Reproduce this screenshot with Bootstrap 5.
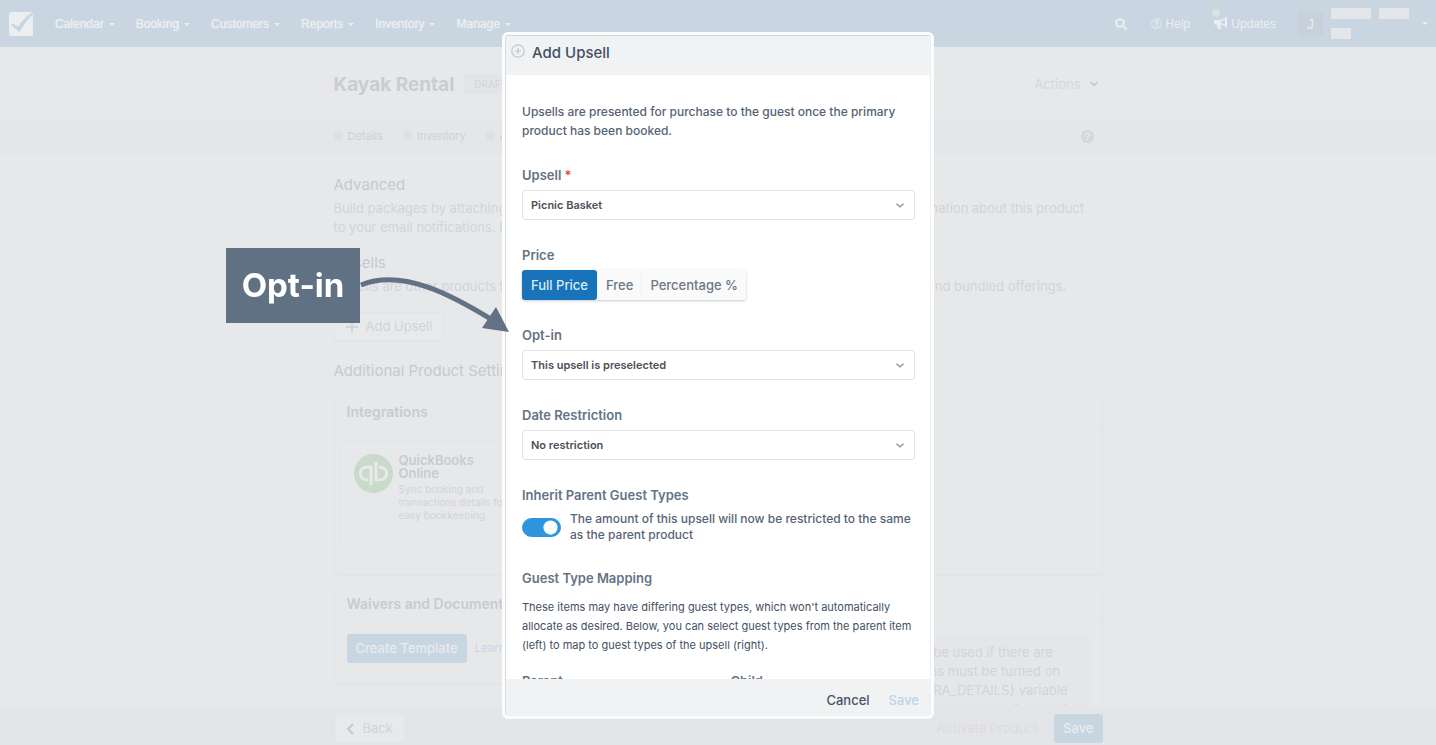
<!DOCTYPE html>
<html lang="en">
<head>
<meta charset="utf-8">
<meta name="viewport" content="width=device-width, initial-scale=1">
<title>Kayak Rental – Add Upsell</title>
<link href="https://cdn.jsdelivr.net/npm/bootstrap@5.3.0/dist/css/bootstrap.min.css" rel="stylesheet">
<style>
  body { font: 400 13px/19px Inter, "Liberation Sans", sans-serif; background: #e7e8ea; color: #d2d4d8; overflow: hidden; height: 100vh; }
  a { text-decoration: none; }
  button { font-family: inherit; }
  .topbar { background: #c9d6e1; min-height: 47px; font: 400 12px/16px "Liberation Sans", sans-serif; --bs-navbar-color: #eceef0; }
  .topbar, .topbar a, .topbar button { color: #eceef0; }
  .topbar .menu { gap: 21px; margin-left: 21px; }
  .topbar button, .plain-btn { background: none; border: 0; padding: 0; }
  .topbar .dropdown-toggle { text-shadow: 0 0 1px #eceef0; }
  .topbar .dropdown-toggle::after { margin-left: 5px; border-width: 3px; border-bottom: 0; vertical-align: 2px; }
  .topbar .account::after { margin-left: 13px; }
  .avatar { width: 25px; height: 25px; background: #c6d1da; border-radius: 3px; font-size: 14px; }
  .who { display: grid; gap: 9px; width: 78px; }
  .redact { height: 11px; background: #e4e6e9; }
  .news-dot { position: absolute; left: -2px; top: -7px; width: 8px; height: 8px; border-radius: 50%; background: #dfe0e0; }
  .updates { margin-right: 22px; }
  .column { max-width: 769px; margin: 0 auto; width: 100%; }
  .title-row { height: 74px; }
  h1 { font-size: 19px; line-height: 24px; font-weight: 700; color: #c9ccd1; margin: 2px 0 0; }
  .draft { font-size: 10px; line-height: 20px; padding: 0 10px; background: #e3e4e8; border-radius: 3px; margin-left: 10px; }
  .tabband { background: #e5e6ea; border-top: 1px solid #e4e6e8; height: 34px; font-size: 11px; padding-bottom: 4px; }
  .tabband a { color: #cfd1d6; }
  .tabband a::before { content: ""; display: inline-block; width: 9px; height: 9px; border-radius: 50%; background: #dedfe3; margin-right: 5px; }
  h2 { font-size: 15px; line-height: 20px; font-weight: 400; color: #c6c9d0; margin: 0; }
  .learn { color: #c7d7e4; }
  .ghost { height: 29px; padding: 0 11px; border: 1px solid #e3e4e7; border-radius: 4px; background: #e8e9eb; color: #d2d4d8; box-shadow: 0 1px 2px #e2e3e6; font-size: 13px; }
  .panel { border: 1px solid #e3e4e7; border-radius: 4px; box-shadow: 0 1px 2px #e3e4e7; }
  .panel h3 { font-size: 14px; line-height: 19px; font-weight: 600; color: #c8cbd1; margin: 0; padding: 6px 12px; border-bottom: 1px solid #e3e4e7; }
  .settings { margin-top: 14px; }
  .integration { width: 220px; height: 108px; margin: 12px 5px 26px; border: 1px solid #e3e4e7; border-radius: 4px; padding: 13px; gap: 6px; }
  .integration div { width: 108px; }
  .integration strong { font-size: 13px; line-height: 13px; font-weight: 600; color: #c8cbd1; display: block; width: 90px; }
  .integration p { font-size: 10px; line-height: 13px; margin: 3px 0 0; }
  .blue { background: #c8d6e1; color: #e9ebed; border: 0; border-radius: 3px; font-size: 13px; font-weight: 500; height: 29px; padding: 0 9px; }
  .template-row { margin: 14px 12px 4px; }
  .note { background: #e5e6ea; border-radius: 4px; margin: 14px 12px 0; padding: 9px 22px; }
  .actionbar { background: #e4e5e9; height: 39px; padding-top: 8px; }

  .modal-frame { width: 432px; max-width: 100%; height: calc(100vh - 58px); margin: 32px auto 0; position: relative; }
  .modal-frame .modal-content { height: 100%; border: 3px solid #fbfcfc; border-radius: 6px; background: #fff; color: #566375; overflow: hidden; background-clip: border-box; }
  .modal-frame .modal-content > * { border-left: 1px solid #d9dbde; border-right: 1px solid #eef0f2; }
  .modal-frame .modal-header { background: #f1f2f4; height: 40px; flex: none; padding: 0 5px 5px; gap: 7px; justify-content: flex-start; border-top: 1px solid #d3d6d9; border-bottom: 0; border-radius: 0; }
  .modal-title { font-size: 15px; line-height: 20px; font-weight: 500; color: #425062; }
  .modal-frame .modal-body { padding: 27px 15px 0 16px; overflow: hidden; }
  .intro { margin: 0 0 27px; font-size: 12px; font-weight: 500; }
  .group { margin-bottom: 27px; }
  .caption { display: block; font-size: 13px; line-height: 16px; font-weight: 600; color: #657386; margin: 0 0 7px; }
  .form-select { height: 30px; padding: 0 30px 0 8px; font-size: 11px; line-height: 28px; font-weight: 600; color: #4c5057; border: 1px solid #e1e3e6; border-radius: 3px;
    background-image: url("data:image/svg+xml,%3csvg xmlns='http://www.w3.org/2000/svg' viewBox='0 0 10 10'%3e%3cpath d='M2 4l3 2.5L8 4' fill='none' stroke='%238b97a6' stroke-width='1.2'/%3e%3c/svg%3e"); background-size: 12px; background-position: right 8px center; }
  .prices { border-radius: 3px; box-shadow: 0 1px 3px #c9cdd3; }
  .prices .btn { font-size: 13px; line-height: 30px; font-weight: 500; padding: 0 8px; border: 0; border-left: 1px solid #f0f1f3; background: #fafafa; color: #6c7886; border-radius: 3px; margin: 0; }
  .prices .btn-check:checked + .btn { background: #1873ba; color: #dcebf7; border-left: 0; padding: 0 9px; }
  .switch-row { margin-top: 8px; }
  .form-check-input.toggle { width: 39px; height: 19px; margin: 0; flex: none; border-color: #2d94de; background-color: #2d94de; background-size: 19px; }
  .hint { font-size: 12px; line-height: 16px; font-weight: 500; margin-left: 9px; }
  .mapping { font-size: 11px; line-height: 19px; margin: 0 0 18px; font-weight: 400; color: #435063; }
  .modal-frame .modal-footer { background: #f1f2f4; flex: none; height: 37px; padding: 5px 11px 0 0; gap: 19px; border-top: 0; border-bottom: 0; border-radius: 0; }
  .modal-footer > * { margin: 0; }
  .modal-footer button { font-size: 13px; font-weight: 500; color: #465365; line-height: 19px; }
  .modal-footer button:disabled { color: #bdd3e6; }

  .callout { position: absolute; left: -276px; top: 216px; pointer-events: none; }
  .callout-label { width: 134px; height: 75px; background: #5b6c7ff5; color: #fff; font-size: 33px; line-height: 74px; font-weight: 700; text-align: center; font-family: Inter, sans-serif; }
</style>
</head>
<body class="modal-open">

<nav class="topbar navbar p-0 px-2 flex-nowrap align-items-center" aria-label="Main">
  <a href="#" aria-label="Home"><svg width="26" height="26" viewBox="0 0 26 26" class="d-block"><rect x="1" y="1" width="24" height="24" rx="2.500" fill="#eceef0"/><path d="M3 14q0-2 3-1l4 2.500Q16 7 23 2l2 0v1Q17 11 11.500 21z" fill="#c9d6e1"/></svg></a>
  <div class="menu d-flex me-auto">
    <button class="dropdown-toggle">Calendar</button>
    <button class="dropdown-toggle">Booking</button>
    <button class="dropdown-toggle">Customers</button>
    <button class="dropdown-toggle">Reports</button>
    <button class="dropdown-toggle">Inventory</button>
    <button class="dropdown-toggle">Manage</button>
  </div>
  <div class="d-flex align-items-center">
    <button aria-label="Search" class="me-4"><svg width="12" height="12" viewBox="0 0 12 12" fill="none" stroke="#eceef0" stroke-width="2" class="d-block"><circle cx="5" cy="5" r="3.8"/><path d="M8 8l3.5 3.5"/></svg></button>
    <a href="#" class="d-flex align-items-center gap-1 me-4"><svg width="11" height="11" viewBox="0 0 12 12" fill="none" stroke="#eceef0"><circle cx="6" cy="6" r="5.3"/><path d="M4.3 4.8Q4.5 3.2 6 3.2T7.7 4.7Q7.7 5.6 6 6.4V7.2M6 8.2v1.3" stroke-width="1.4"/></svg>Help</a>
    <a href="#" class="updates position-relative d-flex align-items-center gap-1"><span class="news-dot"></span><svg width="13" height="13" viewBox="0 0 13 13"><path d="M0 3h5q4 0 7-3h1v10h-1Q9 7.500 6 7.500L7 12H4L3 7.500H0z" fill="#eceef0"/><path d="M7 4.200l4-1.700v5L7 6z" fill="#c9d6e1"/></svg>Updates</a>
    <span class="avatar d-flex align-items-center justify-content-center me-2">J</span>
    <button class="account d-flex align-items-center dropdown-toggle" aria-label="Account">
      <span class="who"><span class="d-flex gap-2"><span class="redact flex-grow-1"></span><span class="redact" style="width:30px"></span></span><span class="redact" style="width:20px"></span></span>
    </button>
  </div>
</nav>

<main>
  <div class="column title-row d-flex align-items-center">
    <h1>Kayak Rental</h1><span class="draft">DRAFT</span>
    <button class="plain-btn ms-auto d-flex align-items-center" style="color:#d4d6da">Actions<svg width="10" height="10" viewBox="0 0 10 10" class="ms-2 me-1" fill="none" stroke="#c4c8ce" stroke-width="1.600"><path d="M1.500 3L5 6.500 8.500 3"/></svg></button>
  </div>
  <div class="tabband d-flex align-items-center">
    <div class="column d-flex align-items-center">
      <a href="#" class="me-3">Details</a><a href="#" class="ms-1 me-3">Inventory</a><a href="#" class="ms-1 me-3">Availability</a>
      <svg class="ms-auto me-2" width="15" height="15" viewBox="0 0 16 16"><circle cx="8" cy="8" r="7" fill="#d5d7db"/><path d="M5.800 6.400Q6 4.300 8 4.300T10.200 6.200Q10.200 7.300 8 8.300V9.200M8 10.400V12" stroke="#e9eaec" stroke-width="1.500" fill="none"/></svg>
    </div>
  </div>

  <div class="column">
    <section class="pt-3 mt-1">
      <h2>Advanced</h2>
      <p class="mb-0 mt-1">Build packages by attaching upsells, resources and notices, or share with your guests more information about this product<br>to your email notifications. <a href="#" class="learn">Learn more</a></p>
    </section>
    <section class="pt-3">
      <h2>Upsells</h2>
      <p class="mb-0 mt-1">Upsells are other products that can be sold together with this one, used for add-ons, extra items and bundled offerings.</p>
      <button class="ghost mt-3 d-flex align-items-center"><svg width="12" height="12" viewBox="0 0 12 12" stroke="#ccd0d4" stroke-width="1.500" class="me-2"><path d="M0 6h12M6 0v12"/></svg>Add Upsell</button>
    </section>
    <section class="pt-3 mt-1">
      <h2>Additional Product Settings</h2>
      <div class="panel settings">
        <h3>Integrations</h3>
        <div class="integration d-flex align-items-start">
          <svg width="39" height="39" viewBox="0 0 40 40" class="flex-shrink-0"><circle cx="20" cy="20" r="20" fill="#cadaca"/><g fill="none" stroke="#e7e9ea" stroke-width="3"><path d="M17.500 32V13.500H13a6.500 6.500 0 0 0 0 13h1.500"/><path d="M22.500 8v18.500H27a6.500 6.500 0 0 0 0-13h-1.500"/></g></svg>
          <div><strong>QuickBooks Online</strong><p>Sync booking and transactions details for easy bookkeeping.</p></div>
        </div>
      </div>
    </section>
    <div class="d-flex gap-3 align-items-start mt-2 pt-1">
      <section class="panel w-50 pb-3">
        <h3>Waivers and Documents</h3>
        <div class="template-row d-flex align-items-center gap-2"><button class="blue">Create Template</button><a href="#" class="learn small">Learn more</a></div>
      </section>
      <section class="panel w-50">
        <h3>Email</h3>
        <p class="note text-end">Extra details may be used if there are &nbsp; &nbsp;<br>Notifications must be turned on &nbsp;<br>{EXTRA_DETAILS} variable<br>in the email</p>
      </section>
    </div>
  </div>
</main>

<footer class="actionbar fixed-bottom">
  <div class="column d-flex align-items-center">
    <button class="ghost d-flex align-items-center"><svg width="9" height="12" viewBox="0 0 9 12" fill="none" stroke="#c4c8ce" stroke-width="2"><path d="M7 1L2 6l5 5"/></svg><span class="ms-2">Back</span></button>
    <button class="plain-btn ms-auto me-3" style="color:#dadbdf">Activate Product</button>
    <button class="blue">Save</button>
  </div>
</footer>

<div class="modal d-block overflow-visible" tabindex="-1" role="dialog" aria-labelledby="upsellTitle">
  <div class="modal-frame">
    <form class="modal-content">
      <div class="modal-header">
        <svg width="14" height="14" viewBox="0 0 14 14" fill="none" stroke="#c2c6ca" stroke-width="1.200" class="mb-1"><circle cx="7" cy="7" r="6.200"/><path d="M4 7h6M7 4v6"/></svg>
        <h5 class="modal-title" id="upsellTitle">Add Upsell</h5>
      </div>
      <div class="modal-body">
        <p class="intro">Upsells are presented for purchase to the guest once the primary product has been booked.</p>
        <div class="group"><label class="caption" for="upsell">Upsell <span style="color:#e8453c">*</span></label>
          <select class="form-select" id="upsell"><option>Picnic Basket</option></select></div>
        <div class="group"><span class="caption" id="priceCap">Price</span>
          <div class="prices d-inline-flex align-top" role="group" aria-labelledby="priceCap">
            <input type="radio" class="btn-check" name="price" id="full" checked><label class="btn" for="full">Full Price</label>
            <input type="radio" class="btn-check" name="price" id="free"><label class="btn" for="free">Free</label>
            <input type="radio" class="btn-check" name="price" id="pct"><label class="btn" for="pct">Percentage %</label>
          </div></div>
        <div class="group"><label class="caption" for="optin">Opt-in</label>
          <select class="form-select" id="optin"><option>This upsell is preselected</option></select></div>
        <div class="group"><label class="caption" for="dates">Date Restriction</label>
          <select class="form-select" id="dates"><option>No restriction</option></select></div>
        <div class="group"><span class="caption">Inherit Parent Guest Types</span>
          <div class="switch-row form-switch d-flex align-items-center p-0"><input class="form-check-input toggle" type="checkbox" role="switch" id="inherit" checked>
            <label class="hint" for="inherit">The amount of this upsell will now be restricted to the same as the parent product</label></div></div>
        <h6 class="caption mb-2 pb-1">Guest Type Mapping</h6>
        <p class="mapping">These items may have differing guest types, which won't automatically allocate as desired. Below, you can select guest types from the parent item (left) to map to guest types of the upsell (right).</p>
        <div class="row gx-4"><span class="caption col-6">Parent</span><span class="caption col-6">Child</span></div>
      </div>
      <div class="modal-footer">
        <button type="button" class="plain-btn">Cancel</button>
        <button type="submit" class="plain-btn" disabled>Save</button>
      </div>
    </form>
    <div class="callout d-flex">
      <div class="callout-label">Opt-in</div>
      <svg width="150" height="90" viewBox="0 0 150 90"><g opacity=".95"><path d="M1 37C42 20 92 47 134 73" fill="none" stroke="#5b6c7f" stroke-width="5"/><path d="M136 59l13 25-27-4z" fill="#5b6c7f"/></g></svg>
    </div>
  </div>
</div>
<script src="https://cdn.jsdelivr.net/npm/bootstrap@5.3.0/dist/js/bootstrap.bundle.min.js"></script>
</body>
</html>
